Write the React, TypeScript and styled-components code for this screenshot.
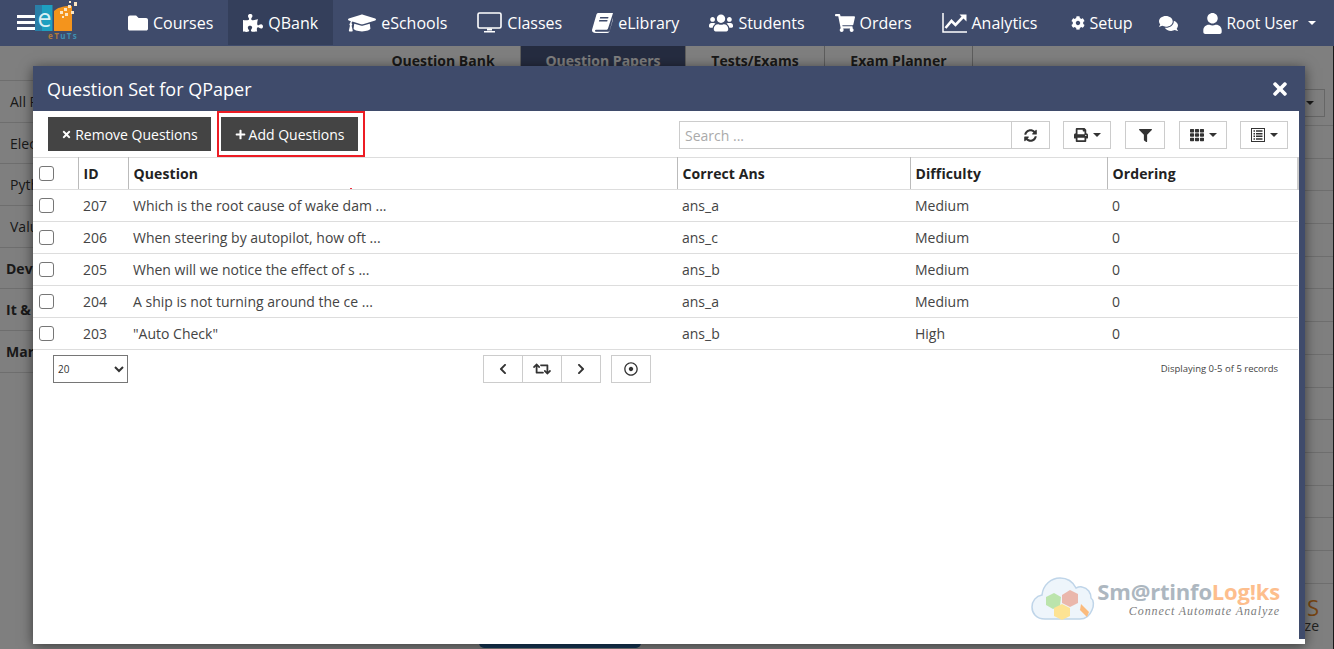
import React from "react";
import styled, { createGlobalStyle } from "styled-components";
import {
  FaFolder, FaPuzzlePiece, FaGraduationCap, FaUsers, FaShoppingCart, FaCog, FaComments, FaUser,
  FaTimes, FaPlus, FaSyncAlt, FaPrint, FaFilter, FaTh, FaChevronLeft, FaChevronRight, FaRetweet,
  FaRegDotCircle, FaRegEye,
} from "react-icons/fa";

const Global = createGlobalStyle`
  html, body { margin: 0; padding: 0; height: 649px; overflow: hidden; background: #fff; }
  body { font-family: "Open Sans", "Liberation Sans", sans-serif; }
  * { box-sizing: border-box; }
`;

const Shell = styled.div`
  position: relative; width: 1334px; height: 649px; overflow: hidden;
  display: flex; flex-direction: column;
`;

const NavBar = styled.nav`
  position: relative; z-index: 3; height: 46px; background: #3f4b6b; color: #fff;
  display: flex; align-items: stretch; flex: none;
`;
const Brand = styled.div`width: 113px; display: flex; align-items: flex-start; flex: none;`;
const Burger = styled.div`
  margin: 15px 0 0 17px; width: 18px; display: flex; flex-direction: column; gap: 3px;
  & > i { display: block; height: 3px; background: #fff; }
`;
const LogoSvg = styled.svg`margin: 1px 0 0 15px; flex: none;`;
const NavItem = styled.div<{ $active?: boolean }>`
  height: 45px; padding: 0 15px; display: flex; align-items: center; gap: 5px;
  font-size: 16px; background: ${(p) => (p.$active ? "#343f5b" : "transparent")};
  & > svg { flex: none; }
`;
const NavRight = styled.div`margin-left: auto; display: flex; align-items: center; padding-right: 18px;`;
const SetupItem = styled.div`display: flex; align-items: center; gap: 4px; font-size: 16px; margin-right: 26px;`;
const ChatIcon = styled(FaComments)`margin-right: 24px;`;
const UserItem = styled.div`display: flex; align-items: center; gap: 4px; font-size: 15.5px;`;
const WhiteCaret = styled.i`
  display: block; margin-left: 6px; width: 0; height: 0;
  border-left: 4px solid transparent; border-right: 4px solid transparent; border-top: 4px solid #fff;
`;

const Page = styled.div`flex: 1; display: flex; min-height: 0; color: #333; border-right: 1px solid #333;`;
const SideList = styled.div`width: 200px; padding-top: 34px; flex: none;`;
const SideRow = styled.div<{ $bold?: boolean }>`
  height: 41.7px; border-top: 1px solid #ddd; display: flex; align-items: center;
  padding-left: ${(p) => (p.$bold ? 6 : 10)}px; font-size: 14px; font-weight: ${(p) => (p.$bold ? 700 : 400)};
`;
const Center = styled.div`flex: 1; display: flex; flex-direction: column; padding-left: 166px;`;
const Tabs = styled.div`display: flex; height: 34px;`;
const Tab = styled.div<{ $active?: boolean; $w: number }>`
  width: ${(p) => p.$w}px; text-align: center; font-size: 14px; font-weight: 700; padding-top: 5px; line-height: 20px;
  background: ${(p) => (p.$active ? "#4a5880" : "transparent")};
  color: ${(p) => (p.$active ? "#fff" : "#333")};
  border-right: 1px solid #bbb;
`;
const PageAction = styled.div`
  margin: auto 0 0 113px; width: 162px; height: 20px; margin-bottom: 1px; background: #2f6fae; border-radius: 5px;
`;
const RightPanel = styled.div`position: relative; width: 240px; padding-top: 43px; flex: none;`;
const RightTool = styled.div`
  margin-left: 184px; width: 48px; height: 28px; border: 1px solid #ccc; display: flex; align-items: center;
  justify-content: center; gap: 4px; margin-bottom: 8px;
`;
const EyeRow = styled.div`
  height: 32.7px; border-top: 1px solid #ddd; display: flex; align-items: center; padding-left: 166px;
`;
const BgBrand = styled.div`
  position: absolute; right: 14px; bottom: 15px; text-align: right; line-height: 16px; font-size: 14px; color: #444;
  & > b { display: block; color: #f08a24; font-size: 22px; line-height: 22px; font-weight: 400; }
`;

const Backdrop = styled.div`position: absolute; z-index: 1; inset: 46px 0 0 0; background: rgba(0, 0, 0, 0.5);`;

const Modal = styled.section`
  position: absolute; z-index: 2; left: 33px; top: 66px; width: 1272px; height: 578px;
  display: flex; flex-direction: column; background: #fff; box-shadow: 0 2px 12px rgba(0, 0, 0, 0.55);
`;
const ModalHead = styled.header`
  height: 45px; flex: none; background: #3f4b6b; color: #fff; display: flex; align-items: center;
  justify-content: space-between; padding: 0 15px 0 14px; font-size: 18px;
`;
const ModalBody = styled.div`
  flex: 1; min-height: 0; position: relative; border-right: 6px solid #3f4b6b; margin-bottom: 5px;
  display: flex; flex-direction: column;
`;
const Toolbar = styled.div`height: 46px; flex: none; display: flex; padding: 0 11px 0 15px;`;
const DarkButton = styled.button`
  height: 34px; border: 0; background: #444; color: #fff; font: 400 14px "Open Sans", sans-serif;
  display: flex; align-items: center; justify-content: center; gap: 3px; padding: 0;
`;
const RemoveButton = styled(DarkButton)`width: 163px; margin-top: 6px;`;
const RedFrame = styled.div`
  margin-left: 6px; width: 148px; height: 46px; border: 2px solid #ed1c24; padding: 4px 0 0 2px;
`;
const AddButton = styled(DarkButton)`width: 137px;`;
const Tools = styled.div`margin-left: auto; padding-top: 10px; display: flex; gap: 13px; align-items: flex-start; color: #333;`;
const SearchGroup = styled.div`display: flex; height: 28px;`;
const SearchInput = styled.input`
  width: 332px; height: 28px; border: 1px solid #ccc; border-right: 0; padding: 0 5px; outline: 0;
  font: 400 14px "Open Sans", sans-serif; color: #333;
  &::placeholder { color: #aaa; opacity: 1; }
`;
const ToolButton = styled.div<{ $w: number; $spaced?: boolean }>`
  width: ${(p) => p.$w}px; height: 28px; border: 1px solid #ccc; background: #fff; display: flex;
  align-items: center; justify-content: center; gap: 5px; margin: ${(p) => (p.$spaced ? "0 1px" : "0")};
`;
const Caret = styled.i`
  display: block; width: 0; height: 0; border-left: 4px solid transparent; border-right: 4px solid transparent;
  border-top: 4px solid #333;
`;

const Grid = styled.table`
  width: 1265px; table-layout: fixed; border-collapse: collapse; font-size: 14px; color: #444;
  border-top: 1px solid #ddd;
`;
const Th = styled.th`
  height: 32px; padding: 0 5px; text-align: left; font-weight: 700; color: #222; letter-spacing: 0.1px;
  border-left: 1px solid #bbb; border-bottom: 1px solid #ddd;
  &:first-child { border-left: 0; padding-left: 6px; }
  &:last-child { border-right: 2px solid #ccc; }
`;
const Td = styled.td`
  height: 32px; padding: 0 5px; border-bottom: 1px solid #ddd; white-space: nowrap; overflow: hidden;
  &:first-child { padding-left: 6px; }
`;
const Check = styled.input`
  appearance: none; display: block; width: 15px; height: 15px; margin: 0; background: #fff;
  border: 1px solid #767676; border-radius: 3px;
`;
const RedTick = styled.i`position: absolute; left: 317px; top: 77px; width: 2px; height: 1px; background: #ee3344;`;

const Footer = styled.div`display: flex; align-items: flex-start; padding: 5px 21px 0 20px; position: relative;`;
const PageSize = styled.select`
  width: 75px; height: 28px; font: 400 10px "Open Sans", sans-serif; color: #333; background: #fff;
  border: 1px solid #767676; border-radius: 0; padding: 0;
`;
const Pager = styled.div`display: flex; margin-left: 355px; height: 28px; color: #333;`;
const PagerCell = styled.div<{ $single?: boolean }>`
  width: 40px; height: 28px; border: 1px solid #ccc; margin-left: -1px; display: flex; align-items: center; justify-content: center;
  &:first-child { margin-left: 0; }
`;
const Single = styled(PagerCell)`margin-left: 10px; &:first-child { margin-left: 10px; }`;
const Records = styled.div`margin-left: auto; font-size: 9.5px; color: #444; line-height: 28px; padding-top: 0;`;

const Watermark = styled.div`
  position: absolute; right: 19px; bottom: 15px; display: flex; align-items: flex-start; gap: 2px; opacity: 0.95;
`;
const WmText = styled.div`display: flex; flex-direction: column; align-items: flex-end; margin-top: 4px;`;
const WmName = styled.div`
  font: 700 22px/26px "Open Sans", sans-serif; color: #a9b4bd; letter-spacing: -0.2px;
  & > span { color: #fdbb87; }
`;
const WmTag = styled.div`font: italic 400 12px/14px "Liberation Serif", serif; color: #777; letter-spacing: 0.9px;`;

const Desktop = () => (
  <svg width="25" height="21" viewBox="0 0 25 21" fill="none">
    <rect x="1" y="1" width="23" height="15" rx="1.5" stroke="#fff" strokeWidth="1.6" />
    <path d="M10 16.5h5v2h-5zM7 19h11v1.5H7z" fill="#fff" />
  </svg>
);
const Book = () => (
  <svg width="21" height="20" viewBox="0 0 21 20" fill="#fff">
    <path d="M6 0h15l-.6 2L16 15.5c-.3.9-.9 1.2-1.8 1.2H4.6c-.9 0-1.6.3-1.6 1s.6 1 1.4 1h11.8c.7 0 1.1-.3 1.4-1L21 5v1.6L17.6 18c-.3 1.2-1.2 2-2.4 2H3.6C1.6 20 0 18.9 0 17.2c0-.3 0-.7.2-1L4.300 2C4.600 1 5.100 0 6 0z" />
    <path d="M8.200 4h8.300l-.4 1.400H7.800zM7.300 7h8.300l-.4 1.400H6.900z" fill="#3f4b6b" />
  </svg>
);
const Chart = () => (
  <svg width="25" height="20" viewBox="0 0 25 20" fill="none">
    <path d="M1 0v19h24" stroke="#fff" strokeWidth="1.500" />
    <path d="M3.500 15l6-7 4 4 8-8.500" stroke="#fff" strokeWidth="2.600" />
    <path d="M17.500 1.500h7v7z" fill="#fff" />
  </svg>
);
const ListBox = () => (
  <svg width="14" height="14" viewBox="0 0 14 14" fill="none">
    <rect x=".5" y=".5" width="13" height="13" stroke="#333" />
    <path d="M2.500 3h1.500M5 3h6.500M2.500 5.700h1.500M5 5.700h6.500M2.500 8.300h1.500M5 8.300h6.500M2.500 11h1.500M5 11h6.500" stroke="#333" strokeWidth="1.500" />
  </svg>
);
const Logo = () => (
  <svg width="44" height="42" viewBox="0 0 44 42">
    <path d="M0 5h17.500v26H0z" fill="#1e9fc0" />
    <path d="M0 5h7v26H0z" fill="#2a7fa8" />
    <path d="M19 11c3-3 8-5 18-5v25H19z" fill="#f4941c" />
    <text x="2.500" y="27" fontSize="25" fill="#d9f0f5" fontFamily="Open Sans, sans-serif">e</text>
    <path d="M25 11h3v3h-3zM29 8h3v3h-3zM33 5h3v3h-3zM30 13h3v3h-3zM36 11h3v3h-3zM39 2h3v4h-3zM34 1h2v2h-2zM27 16h2v2h-2z" fill="#fbe6c4" />
    <text x="13" y="39" fontSize="8" fontWeight="700" fill="#b0793a" letterSpacing="1.400" fontFamily="Open Sans, sans-serif">eT<tspan fill="#3f8fb0">uTs</tspan></text>
  </svg>
);
const Cloud = () => (
  <svg width="64" height="50" viewBox="0 0 64 50">
    <path d="M14 45C5 45 1 39 1 33c0-6 4-11 10-12 1-10 9-17 18-17 7 0 13 4 16 10 2-1 4-2 6-1 6 1 9 6 9 11 3 2 3 8 1 12-2 5-6 9-12 9z" fill="#eef5fb" stroke="#bcd3e8" strokeWidth="1.500" />
    <path d="M15 23l8-4 7 4-1 9-7 3-7-4z" fill="#b8e3a8" />
    <path d="M31 21l8-5 8 4v9l-8 4-8-4z" fill="#e9b4a8" />
    <path d="M23 34l8-4 8 4v8l-8 4-8-4z" fill="#fde28e" />
    <path d="M58 38l-8-8-1 6-2-2 9 9z" fill="#fbb877" />
  </svg>
);

const rows = [
  ["207", "Which is the root cause of wake dam ...", "ans_a", "Medium", "0"],
  ["206", "When steering by autopilot, how oft ...", "ans_c", "Medium", "0"],
  ["205", "When will we notice the effect of s ...", "ans_b", "Medium", "0"],
  ["204", "A ship is not turning around the ce ...", "ans_a", "Medium", "0"],
  ["203", '"Auto Check"', "ans_b", "High", "0"],
];
const nav: [React.ReactNode, string, boolean?][] = [
  [<FaFolder size={20} key="a" />, "Courses"],
  [<FaPuzzlePiece size={20} key="b" />, "QBank", true],
  [<FaGraduationCap size={28} key="c" />, "eSchools"],
  [<Desktop key="d" />, "Classes"],
  [<Book key="e" />, "eLibrary"],
  [<FaUsers size={24} key="f" />, "Students"],
  [<FaShoppingCart size={20} key="g" />, "Orders"],
  [<Chart key="h" />, "Analytics"],
];

export default function App() {
  return (
    <Shell>
      <Global />
      <NavBar>
        <Brand>
          <Burger><i /><i /><i /></Burger>
          <LogoSvg as={Logo} />
        </Brand>
        {nav.map(([icon, label, active]) => (
          <NavItem key={label} $active={active}>{icon}{label}</NavItem>
        ))}
        <NavRight>
          <SetupItem><FaCog size={14} />Setup</SetupItem>
          <ChatIcon size={19} />
          <UserItem><FaUser size={21} />Root User<WhiteCaret /></UserItem>
        </NavRight>
      </NavBar>
      <Page>
        <SideList>
          <SideRow>All Papers</SideRow>
          <SideRow>Electives</SideRow>
          <SideRow>Python</SideRow>
          <SideRow>Values</SideRow>
          <SideRow $bold>Development</SideRow>
          <SideRow $bold>It &amp; Software</SideRow>
          <SideRow $bold>Marketing</SideRow>
          <SideRow />
        </SideList>
        <Center>
          <Tabs>
            <Tab $w={155}>Question Bank</Tab>
            <Tab $w={165} $active>Question Papers</Tab>
            <Tab $w={139}>Tests/Exams</Tab>
            <Tab $w={148}>Exam Planner</Tab>
          </Tabs>
          <PageAction />
        </Center>
        <RightPanel>
          <RightTool><ListBox /><Caret /></RightTool>
          {Array.from({ length: 15 }).map((_, i) => (
            <EyeRow key={i}><FaRegEye size={18} color="#222" /></EyeRow>
          ))}
          <BgBrand><b>S</b>ze</BgBrand>
        </RightPanel>
      </Page>
      <Backdrop />
      <Modal>
        <ModalHead>
          Question Set for QPaper
          <FaTimes size={20} />
        </ModalHead>
        <ModalBody>
          <Toolbar>
            <RemoveButton><FaTimes size={11} />Remove Questions</RemoveButton>
            <RedFrame>
              <AddButton><FaPlus size={11} />Add Questions</AddButton>
            </RedFrame>
            <Tools>
              <SearchGroup>
                <SearchInput placeholder="Search ..." />
                <ToolButton $w={39}><FaSyncAlt size={13} /></ToolButton>
              </SearchGroup>
              <ToolButton $w={48}><FaPrint size={14} /><Caret /></ToolButton>
              <ToolButton $w={40} $spaced><FaFilter size={13} /></ToolButton>
              <ToolButton $w={48}><FaTh size={14} /><Caret /></ToolButton>
              <ToolButton $w={48}><ListBox /><Caret /></ToolButton>
            </Tools>
          </Toolbar>
          <Grid>
            <colgroup>
              <col width="45" /><col width="50" /><col width="549" /><col width="233" /><col width="197" /><col width="191" />
            </colgroup>
            <thead>
              <tr>
                <Th><Check type="checkbox" /></Th>
                <Th>ID</Th><Th>Question</Th><Th>Correct Ans</Th><Th>Difficulty</Th><Th>Ordering</Th>
              </tr>
            </thead>
            <tbody>
              {rows.map((r) => (
                <tr key={r[0]}>
                  <Td><Check type="checkbox" /></Td>
                  {r.map((c, i) => <Td key={i}>{c}</Td>)}
                </tr>
              ))}
            </tbody>
          </Grid>
          <RedTick />
          <Footer>
            <PageSize defaultValue="20"><option>20</option><option>50</option><option>100</option></PageSize>
            <Pager>
              <PagerCell><FaChevronLeft size={12} /></PagerCell>
              <PagerCell><FaRetweet size={18} /></PagerCell>
              <PagerCell><FaChevronRight size={12} /></PagerCell>
              <Single><FaRegDotCircle size={14} /></Single>
            </Pager>
            <Records>Displaying 0-5 of 5 records</Records>
          </Footer>
          <Watermark>
            <Cloud />
            <WmText>
              <WmName>Sm@rtinfo<span>Log!ks</span></WmName>
              <WmTag>Connect Automate Analyze</WmTag>
            </WmText>
          </Watermark>
        </ModalBody>
      </Modal>
    </Shell>
  );
}
